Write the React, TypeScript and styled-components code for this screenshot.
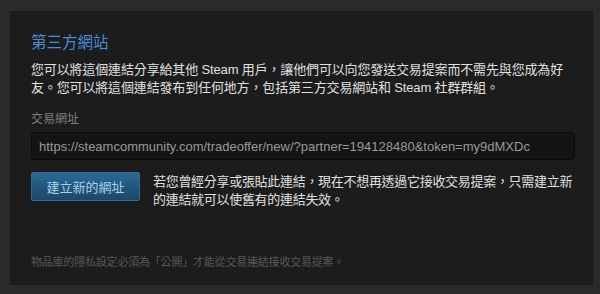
import React from "react";
import styled, { createGlobalStyle } from "styled-components";

const Global = createGlobalStyle`
  html, body { margin: 0; padding: 0; background: #2a2a2a; }
  body { font-family: Arial, "Liberation Sans", "Noto Sans CJK TC", sans-serif; }
`;

const Page = styled.div`
  width: 600px;
  height: 294px;
  box-sizing: border-box;
  padding: 11px 7px 9px 10px;
  background: #2a2a2a;
`;

const Panel = styled.section`
  height: 100%;
  box-sizing: border-box;
  background: #1c1c1c;
  padding: 22px 18px 16px 21px;
  display: flex;
  flex-direction: column;
`;

const Title = styled.h2`
  margin: 0;
  font-size: 15.5px;
  line-height: 20px;
  font-weight: normal;
  color: #468fd9;
  font-family: "Liberation Sans", "Noto Sans CJK TC", sans-serif;
`;

const Paragraph = styled.p`
  margin: 8px 0 0;
  font-size: 13px;
  line-height: 18px;
  letter-spacing: -0.15px;
  color: #e0e0e0;
  font-family: "Liberation Sans", "Noto Sans CJK TC", sans-serif;
`;

const Label = styled.div`
  margin-top: 14px;
  font-size: 12px;
  line-height: 16px;
  color: #7c7c7c;
  font-family: "Liberation Sans", "Noto Sans CJK TC", sans-serif;
`;

const UrlBox = styled.div`
  margin-top: 5px;
  height: 28px;
  box-sizing: border-box;
  border: 1px solid #0b0b0b;
  border-radius: 3px;
  background: #141414;
  display: flex;
  align-items: center;
  padding: 0 7px;
  font-size: 13px;
  color: #9a9a9a;
  font-family: "Liberation Sans", sans-serif;
  white-space: nowrap;
  overflow: hidden;
`;

const ActionRow = styled.div`
  margin-top: 13px;
  display: flex;
  align-items: flex-start;
  gap: 13px;
`;

const Button = styled.button`
  flex: none;
  width: 109px;
  height: 29px;
  margin-top: -1px;
  border: 1px solid #2f6e99;
  border-radius: 2px;
  background: linear-gradient(to bottom, #2d6a95 0%, #24577d 50%, #1c4866 100%);
  color: #a6d3ef;
  font-size: 13px;
  font-family: "Liberation Sans", "Noto Sans CJK TC", sans-serif;
  padding: 0;
  cursor: pointer;
`;

const Note = styled.p`
  margin: 0;
  flex: 1;
  font-size: 13px;
  line-height: 18px;
  letter-spacing: -0.3px;
  color: #e0e0e0;
  font-family: "Liberation Sans", "Noto Sans CJK TC", sans-serif;
`;

const Footer = styled.div`
  margin-top: auto;
  font-size: 11px;
  line-height: 14px;
  letter-spacing: -0.2px;
  color: #575757;
  font-family: "Liberation Sans", "Noto Sans CJK TC", sans-serif;
`;

export default function App() {
  return (
    <>
      <Global />
      <Page>
        <Panel>
          <Title>第三方網站</Title>
          <Paragraph>
            您可以將這個連結分享給其他 Steam 用戶，讓他們可以向您發送交易提案而不需先與您成為好友。您可以將這個連結發布到任何地方，包括第三方交易網站和 Steam 社群群組。
          </Paragraph>
          <Label>交易網址</Label>
          <UrlBox>https://steamcommunity.com/tradeoffer/new/?partner=194128480&amp;token=my9dMXDc</UrlBox>
          <ActionRow>
            <Button>建立新的網址</Button>
            <Note>
              若您曾經分享或張貼此連結，現在不想再透過它接收交易提案，只需建立新的連結就可以使舊有的連結失效。
            </Note>
          </ActionRow>
          <Footer>物品庫的隱私設定必須為「公開」才能從交易連結接收交易提案。</Footer>
        </Panel>
      </Page>
    </>
  );
}
